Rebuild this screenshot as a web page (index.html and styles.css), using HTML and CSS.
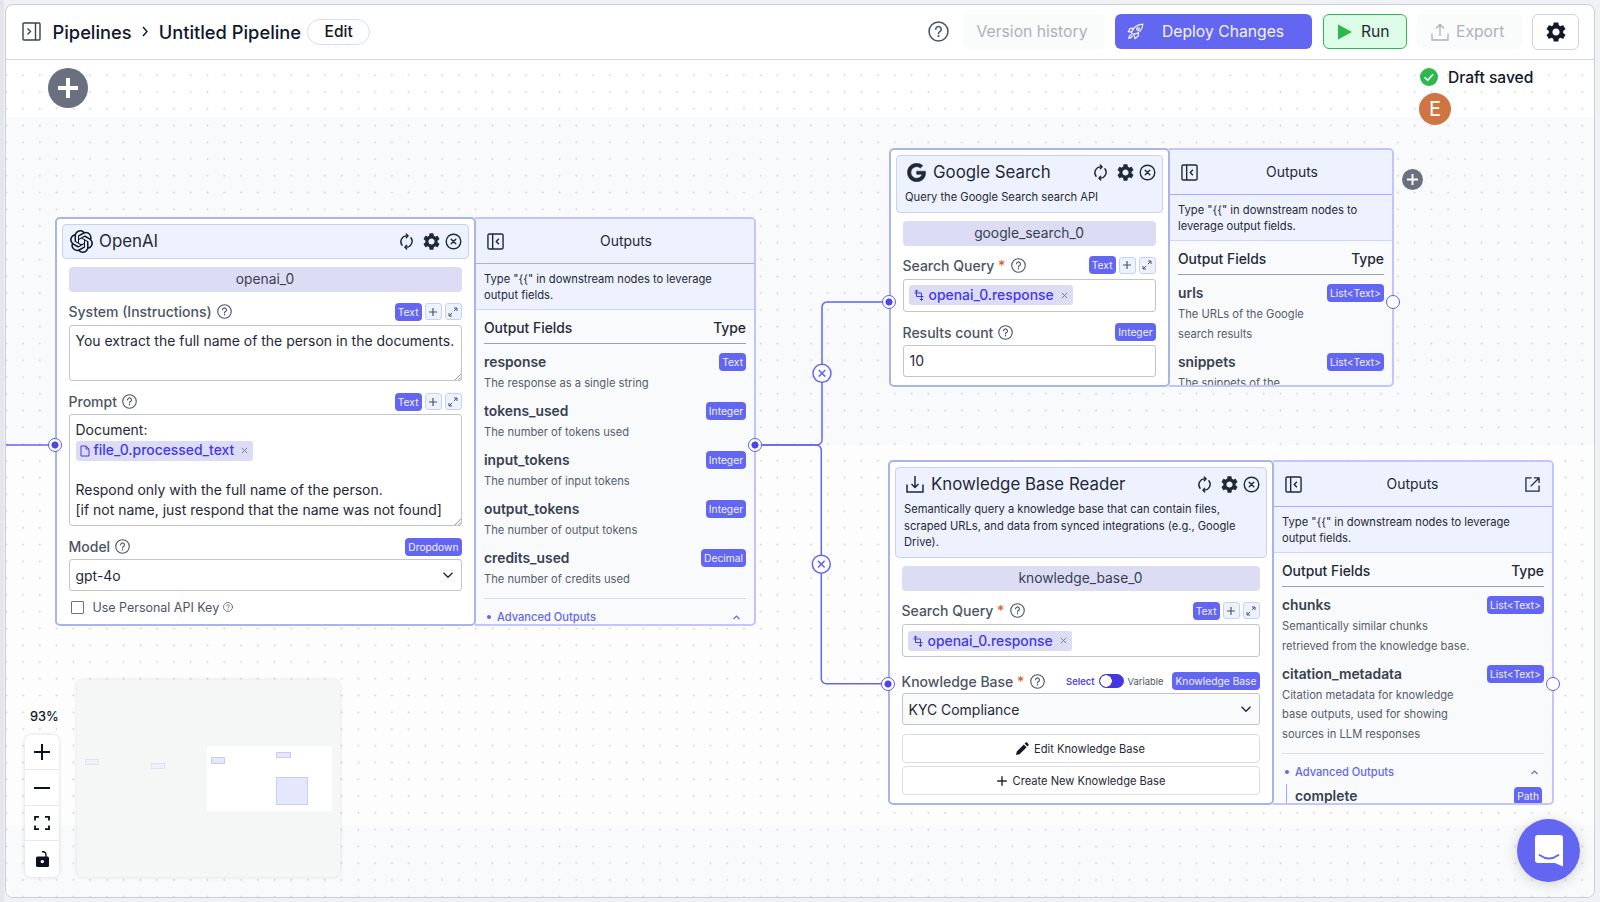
FILE: index.html
```html
<!DOCTYPE html>
<html lang="en">
<head>
    <meta charset="UTF-8">
    <meta name="viewport" content="width=device-width, initial-scale=1.0">
    <title>Untitled Pipeline</title>
    <link rel="stylesheet" href="styles.css">
</head>
<body>
    <!-- Icon sprite -->
    <svg class="sprite" width="0" height="0">
        <symbol id="i-help" viewBox="0 0 20 20"><g fill="none" stroke="currentColor" stroke-width="1.5" stroke-linecap="round"><circle cx="10" cy="10" r="9"/><path d="M7.4 7.8a2.6 2.6 0 1 1 3.9 2.3c-.9.5-1.3 1-1.3 1.9"/></g><circle cx="10" cy="14.4" r="1" fill="currentColor"/></symbol>
        <symbol id="i-gear" viewBox="2 2 20 20"><path fill="currentColor" d="M19.14 12.94c.04-.3.06-.61.06-.94 0-.32-.02-.64-.07-.94l2.03-1.58a.49.49 0 0 0 .12-.61l-1.92-3.32a.488.488 0 0 0-.59-.22l-2.39.96c-.5-.38-1.03-.7-1.62-.94l-.36-2.54a.484.484 0 0 0-.48-.41h-3.84c-.24 0-.43.17-.47.41l-.36 2.54c-.59.24-1.13.57-1.62.94l-2.39-.96c-.22-.08-.47 0-.59.22L2.74 8.87c-.12.21-.08.47.12.61l2.03 1.58c-.05.3-.09.63-.09.94s.02.64.07.94l-2.03 1.58a.49.49 0 0 0-.12.61l1.92 3.32c.12.22.37.29.59.22l2.39-.96c.5.38 1.03.7 1.62.94l.36 2.54c.05.24.24.41.48.41h3.84c.24 0 .44-.17.47-.41l.36-2.54c.59-.24 1.13-.56 1.62-.94l2.39.96c.22.08.47 0 .59-.22l1.92-3.32c.12-.22.07-.47-.12-.61l-2.01-1.58zM12 15.6c-1.98 0-3.6-1.62-3.6-3.6s1.62-3.6 3.6-3.6 3.6 1.62 3.6 3.6-1.62 3.6-3.6 3.6z"/></symbol>
        <symbol id="i-sync" viewBox="0 0 16 18"><g fill="none" stroke="currentColor" stroke-width="1.5" stroke-linecap="round" stroke-linejoin="round"><path d="M3.3 13A6.2 6.2 0 0 1 8 3h1.5M7.8 1l2 2-2 2"/><path d="M12.7 5A6.2 6.2 0 0 1 8 15H6.5M8.2 13l-2 2 2 2"/></g></symbol>
        <symbol id="i-close" viewBox="0 0 18 18"><g fill="none" stroke="currentColor" stroke-width="1.5" stroke-linecap="round"><circle cx="9" cy="9" r="7.7"/><path d="m6.6 6.6 4.8 4.8M11.4 6.6l-4.8 4.8"/></g></symbol>
        <symbol id="i-plus" viewBox="0 0 10 10"><path d="M5 1v8M1 5h8" stroke="currentColor" stroke-width="1.2" fill="none"/></symbol>
        <symbol id="i-expand" viewBox="0 0 10 10"><path d="M6 1h3v3M9 1 5.9 4.1M4 9H1V6M1 9l3.1-3.1" stroke="currentColor" fill="none"/></symbol>
        <symbol id="i-down" viewBox="0 0 12 12"><path d="m1.5 3.8 4.5 4.4 4.5-4.4" stroke="currentColor" stroke-width="1.4" fill="none"/></symbol>
        <symbol id="i-up" viewBox="0 0 12 12"><path d="m2 8 4-4 4 4" stroke="currentColor" stroke-width="1.6" fill="none"/></symbol>
        <symbol id="i-panel" viewBox="0 0 18 18"><path d="M2.5 1h13A1.5 1.5 0 0 1 17 2.5v13a1.5 1.5 0 0 1-1.5 1.5h-13A1.5 1.5 0 0 1 1 15.5v-13A1.5 1.5 0 0 1 2.5 1zM6 1v16M12.6 6 9.8 9l2.8 3" stroke="currentColor" stroke-width="1.5" fill="none"/></symbol>
        <symbol id="i-link" viewBox="0 0 12 12"><path d="M3.5 1v6.5h7M8.5 11.5V4H1.5M1.8 2.7 3.5 1l1.700 1.700M6.800 9.800l1.700 1.700 1.700-1.700" stroke="currentColor" fill="none"/></symbol>
        <symbol id="i-x" viewBox="0 0 8 8"><path d="m1 1 6 6M7 1 1 7" stroke="currentColor" fill="none"/></symbol>
    </svg>

    <div class="app">
        <!-- Top bar -->
        <header class="topbar">
            <svg class="icon toggle" width="19" height="19" viewBox="0 0 19 19"><path d="M2 1h15a1 1 0 0 1 1 1v15a1 1 0 0 1-1 1H2a1 1 0 0 1-1-1V2a1 1 0 0 1 1-1zM13.5 1v17M5.5 6.500l3 3-3 3" stroke="currentColor" stroke-width="1.4" fill="none"/></svg>
            <nav class="crumbs">
                <span>Pipelines</span>
                <svg width="8" height="11" viewBox="0 0 8 11"><path d="m2 1 4 4.500L2 10" stroke="currentColor" stroke-width="1.4" fill="none"/></svg>
                <span>Untitled Pipeline</span>
            </nav>
            <button class="edit">Edit</button>
            <div class="actions">
                <svg class="help" width="21" height="21"><use href="#i-help"/></svg>
                <button class="btn muted history">Version history</button>
                <button class="btn deploy">
                    <svg width="17" height="17" viewBox="0 0 17 17"><g fill="none" stroke="currentColor" stroke-width="1.2" stroke-linejoin="round"><path d="M6 11.300c-.8-.4-1.200-.9-1.600-1.600C6 5 9.500 1.500 15.800 1.200 15.500 7.500 11 10.500 6 11.300zM6.500 5.300H3.200L1.300 8.600l3.200.6M11.400 9.300v3.500l-3.400 2.900-1.200-4.400M4.400 11.700c-1.800.3-2.300 1.800-2.700 3.700 2-.2 3.300-1 3.700-2.700"/><circle cx="11" cy="6" r="1.3"/></g></svg>
                    <span>Deploy Changes</span>
                </button>
                <button class="btn run">
                    <svg width="14" height="16" viewBox="0 0 14 16"><path d="M0 .5 14 8 0 15.500z" fill="#2db84d"/></svg>
                    <span>Run</span>
                </button>
                <button class="btn muted export">
                    <svg width="18" height="18" viewBox="0 0 18 18"><path d="M1 10.500V17h16v-6.500M9 13V1.500M5 5.500l4-4 4 4" stroke="currentColor" stroke-width="1.3" fill="none"/></svg>
                    <span>Export</span>
                </button>
                <button class="btn settings"><svg width="20" height="20"><use href="#i-gear"/></svg></button>
            </div>
        </header>

        <!-- Canvas -->
        <main class="canvas">
            <svg class="edges" width="1588" height="837">
                <path d="M0 385H44M756 385H811a5 5 0 0 0 5-5V247a5 5 0 0 1 5-5H877"/>
                <path d="M756 385H810.300a5 5 0 0 1 5 5V618.700a5 5 0 0 0 5 5H875"/>
                <g class="cut">
                    <circle cx="816" cy="313.3" r="9"/><path d="m812.700 310 6.600 6.600m0-6.600-6.600 6.600"/>
                    <circle cx="815.3" cy="504.2" r="9"/><path d="m812 500.900 6.600 6.600m0-6.600-6.600 6.600"/>
                </g>
            </svg>

            <button class="add-node"><svg width="20" height="20" viewBox="0 0 20 20"><path d="M10 0v20M0 10h20" stroke="#fff" stroke-width="4"/></svg></button>

            <div class="status">
                <div class="saved">
                    <svg width="18" height="18" viewBox="0 0 18 18"><circle cx="9" cy="9" r="9" fill="#2db84d"/><path d="m4.600 9.300 3 3 5.600-6" stroke="#fff" stroke-width="1.6" fill="none"/></svg>
                    <span>Draft saved</span>
                </div>
                <div class="avatar">E</div>
            </div>

            <!-- OpenAI -->
            <section class="node node-openai">
                <div class="card">
                    <div class="card-head">
                        <div class="title">
                            <svg width="23" height="23" viewBox="0 0 24 24"><path fill="#111827" d="M22.282 9.821a5.985 5.985 0 0 0-.516-4.910 6.046 6.046 0 0 0-6.510-2.900A6.065 6.065 0 0 0 4.981 4.182a5.985 5.985 0 0 0-3.998 2.900 6.046 6.046 0 0 0 .743 7.097 5.980 5.980 0 0 0 .510 4.911 6.051 6.051 0 0 0 6.515 2.900A5.985 5.985 0 0 0 13.260 24a6.056 6.056 0 0 0 5.772-4.206 5.990 5.990 0 0 0 3.998-2.900 6.056 6.056 0 0 0-.748-7.073zM13.260 22.430a4.476 4.476 0 0 1-2.876-1.040l.141-.081 4.779-2.758a.795.795 0 0 0 .393-.681v-6.737l2.020 1.168a.071.071 0 0 1 .038.052v5.583a4.504 4.504 0 0 1-4.495 4.494zM3.600 18.304a4.470 4.470 0 0 1-.535-3.014l.142.085 4.783 2.759a.771.771 0 0 0 .780 0l5.843-3.369v2.332a.080.080 0 0 1-.033.062L9.740 19.950a4.500 4.500 0 0 1-6.140-1.646zM2.340 7.896a4.485 4.485 0 0 1 2.366-1.973V11.600a.766.766 0 0 0 .388.676l5.815 3.355-2.020 1.168a.076.076 0 0 1-.071 0l-4.830-2.786A4.504 4.504 0 0 1 2.340 7.872zm16.597 3.855l-5.833-3.387L15.119 7.200a.076.076 0 0 1 .071 0l4.830 2.791a4.494 4.494 0 0 1-.676 8.105v-5.678a.790.790 0 0 0-.407-.667zm2.010-3.023l-.141-.085-4.774-2.782a.776.776 0 0 0-.785 0L9.409 9.230V6.897a.066.066 0 0 1 .028-.061l4.830-2.787a4.500 4.500 0 0 1 6.680 4.660zm-12.640 4.135l-2.020-1.164a.080.080 0 0 1-.038-.057V6.075a4.500 4.500 0 0 1 7.375-3.453l-.142.080L8.704 5.460a.795.795 0 0 0-.393.681zm1.097-2.365l2.602-1.500 2.607 1.500v2.999l-2.597 1.500-2.607-1.500z"/></svg>
                            <h2>OpenAI</h2>
                            <div class="tools"><svg class="sync"><use href="#i-sync"/></svg><svg><use href="#i-gear"/></svg><svg><use href="#i-close"/></svg></div>
                        </div>
                    </div>
                    <div class="body">
                        <div class="node-name">openai_0</div>
                        <div class="label"><span>System (Instructions)</span><svg><use href="#i-help"/></svg><i class="badge">Text</i><i class="mini"><svg><use href="#i-plus"/></svg></i><i class="mini"><svg><use href="#i-expand"/></svg></i></div>
                        <div class="area area-system">You extract the full name of the person in the documents.<svg class="grip" viewBox="0 0 8 8"><path d="M1 8 8 1M5 8l3-3"/></svg></div>
                        <div class="label"><span>Prompt</span><svg><use href="#i-help"/></svg><i class="badge">Text</i><i class="mini"><svg><use href="#i-plus"/></svg></i><i class="mini"><svg><use href="#i-expand"/></svg></i></div>
                        <div class="area area-prompt">
                            <div>Document:</div>
                            <div class="chip"><svg width="10" height="12" viewBox="0 0 10 12"><path d="M1 1h5l3 3v7H1zM6 1v3h3" stroke="currentColor" fill="none"/></svg>file_0.processed_text<svg class="x"><use href="#i-x"/></svg></div>
                            <div class="gap"></div>
                            <div>Respond only with the full name of the person.</div>
                            <div>[if not name, just respond that the name was not found]</div>
                            <svg class="grip" viewBox="0 0 8 8"><path d="M1 8 8 1M5 8l3-3"/></svg>
                        </div>
                        <div class="label"><span>Model</span><svg><use href="#i-help"/></svg><i class="badge">Dropdown</i></div>
                        <div class="input select">gpt-4o<svg><use href="#i-down"/></svg></div>
                        <div class="check"><b></b>Use Personal API Key<svg><use href="#i-help"/></svg></div>
                    </div>
                </div>
                <div class="outputs">
                    <div class="out-head"><svg><use href="#i-panel"/></svg><span>Outputs</span></div>
                    <div class="out-note">Type "{{" in downstream nodes to leverage output fields.</div>
                    <div class="out-list">
                        <div class="out-cols"><span>Output Fields</span><span>Type</span></div>
                        <div class="field"><h3>response</h3><i class="badge">Text</i><p>The response as a single string</p></div>
                        <div class="field"><h3>tokens_used</h3><i class="badge">Integer</i><p>The number of tokens used</p></div>
                        <div class="field"><h3>input_tokens</h3><i class="badge">Integer</i><p>The number of input tokens</p></div>
                        <div class="field"><h3>output_tokens</h3><i class="badge">Integer</i><p>The number of output tokens</p></div>
                        <div class="field"><h3>credits_used</h3><i class="badge">Decimal</i><p>The number of credits used</p></div>
                        <div class="advanced"><b></b>Advanced Outputs<svg><use href="#i-up"/></svg></div>
                    </div>
                </div>
                <span class="handle in on"></span>
                <span class="handle out on"></span>
            </section>

            <!-- Google Search -->
            <section class="node node-google">
                <div class="card">
                    <div class="card-head">
                        <div class="title">
                            <svg class="g" width="19" height="19" viewBox="-8 0 504 512"><path fill="#1f2937" stroke="#1f2937" stroke-width="14" d="M488 261.800C488 403.300 391.100 504 248 504 110.800 504 0 393.200 0 256S110.800 8 248 8c66.800 0 123 24.500 166.300 64.900l-67.500 64.900C258.500 52.600 94.300 116.600 94.300 256c0 86.500 69.100 156.600 153.700 156.600 98.200 0 135-70.400 140.800-106.900H248v-85.300h236.100c2.300 12.700 3.900 24.900 3.900 41.400z"/></svg>
                            <h2>Google Search</h2>
                            <div class="tools"><svg class="sync"><use href="#i-sync"/></svg><svg><use href="#i-gear"/></svg><svg><use href="#i-close"/></svg></div>
                        </div>
                        <p>Query the Google Search search API</p>
                    </div>
                    <div class="body">
                        <div class="node-name">google_search_0</div>
                        <div class="label"><span>Search Query <em>*</em></span><svg><use href="#i-help"/></svg><i class="badge">Text</i><i class="mini"><svg><use href="#i-plus"/></svg></i><i class="mini"><svg><use href="#i-expand"/></svg></i></div>
                        <div class="input tall"><div class="chip"><svg width="12" height="12"><use href="#i-link"/></svg>openai_0.response<svg class="x"><use href="#i-x"/></svg></div></div>
                        <div class="label"><span>Results count</span><svg><use href="#i-help"/></svg><i class="badge">Integer</i></div>
                        <div class="input">10</div>
                    </div>
                </div>
                <div class="outputs">
                    <div class="out-head"><svg><use href="#i-panel"/></svg><span>Outputs</span></div>
                    <div class="out-note">Type "{{" in downstream nodes to leverage output fields.</div>
                    <div class="out-list">
                        <div class="out-cols"><span>Output Fields</span><span>Type</span></div>
                        <div class="field"><h3>urls</h3><i class="badge">List&lt;Text&gt;</i><p>The URLs of the Google search results</p></div>
                        <div class="field"><h3>snippets</h3><i class="badge">List&lt;Text&gt;</i><p>The snippets of the</p></div>
                    </div>
                </div>
                <span class="handle in on"></span>
                <span class="handle out"></span>
                <button class="add-next"><svg width="11" height="11" viewBox="0 0 11 11"><path d="M5.500 0v11M0 5.500h11" stroke="#fff" stroke-width="1.9"/></svg></button>
            </section>

            <!-- Knowledge Base Reader -->
            <section class="node node-kb">
                <div class="card">
                    <div class="card-head">
                        <div class="title">
                            <svg class="g" width="18" height="18" viewBox="0 0 18 18"><path d="M1 9.500V17h16V9.500M9 1v11M5.500 9 9 12.500 12.500 9" stroke="#1f2937" stroke-width="1.5" fill="none"/></svg>
                            <h2>Knowledge Base Reader</h2>
                            <div class="tools"><svg class="sync"><use href="#i-sync"/></svg><svg><use href="#i-gear"/></svg><svg><use href="#i-close"/></svg></div>
                        </div>
                        <p>Semantically query a knowledge base that can contain files, scraped URLs, and data from synced integrations (e.g., Google Drive).</p>
                    </div>
                    <div class="body">
                        <div class="node-name">knowledge_base_0</div>
                        <div class="label"><span>Search Query <em>*</em></span><svg><use href="#i-help"/></svg><i class="badge">Text</i><i class="mini"><svg><use href="#i-plus"/></svg></i><i class="mini"><svg><use href="#i-expand"/></svg></i></div>
                        <div class="input tall"><div class="chip"><svg width="12" height="12"><use href="#i-link"/></svg>openai_0.response<svg class="x"><use href="#i-x"/></svg></div></div>
                        <div class="label label-kb"><span>Knowledge Base <em>*</em></span><svg><use href="#i-help"/></svg><div class="switch"><strong>Select</strong><b></b>Variable</div><i class="badge">Knowledge Base</i></div>
                        <div class="input select tinted">KYC Compliance<svg><use href="#i-down"/></svg></div>
                        <button class="wide first"><svg width="13" height="13" viewBox="0 0 13 13"><path d="m0 13 .8-3.600 7-7 2.800 2.800-7 7zM8.600 1.600l1-1q.8-.7 1.500 0l1.300 1.300q.7.8 0 1.500l-1 1z" fill="#111827"/></svg>Edit Knowledge Base</button>
                        <button class="wide"><svg width="12" height="12"><use href="#i-plus"/></svg>Create New Knowledge Base</button>
                    </div>
                </div>
                <div class="outputs">
                    <div class="out-head"><svg><use href="#i-panel"/></svg><span>Outputs</span><svg class="open" viewBox="0 0 16 16"><path d="M7 1H1v14h14V9M9.500 1H15v5.500M15 1 6 10" stroke="currentColor" stroke-width="1.4" fill="none"/></svg></div>
                    <div class="out-note">Type "{{" in downstream nodes to leverage output fields.</div>
                    <div class="out-list">
                        <div class="out-cols"><span>Output Fields</span><span>Type</span></div>
                        <div class="field"><h3>chunks</h3><i class="badge">List&lt;Text&gt;</i><p>Semantically similar chunks retrieved from the knowledge base.</p></div>
                        <div class="field"><h3>citation_metadata</h3><i class="badge">List&lt;Text&gt;</i><p>Citation metadata for knowledge base outputs, used for showing sources in LLM responses</p></div>
                        <div class="advanced"><b></b>Advanced Outputs<svg><use href="#i-up"/></svg></div>
                        <div class="field nested"><h3>complete</h3><i class="badge">Path</i></div>
                    </div>
                </div>
                <span class="handle in on"></span>
                <span class="handle out"></span>
            </section>

            <!-- Zoom controls and minimap -->
            <div class="zoom">
                <span>93%</span>
                <div class="zoom-buttons">
                    <button><svg width="16" height="16" viewBox="0 0 16 16"><path d="M8 0v16M0 8h16" stroke="currentColor" stroke-width="2"/></svg></button>
                    <button><svg width="16" height="16" viewBox="0 0 16 16"><path d="M0 8h16" stroke="currentColor" stroke-width="2"/></svg></button>
                    <button><svg width="16" height="16" viewBox="0 0 16 16"><path d="M1 5.500V1.800h4M11 1.800h4v3.700M15 10.500v3.700h-4M5 14.200H1v-3.700" stroke="currentColor" stroke-width="1.8" fill="none"/></svg></button>
                    <button><svg width="13" height="16" viewBox="0 0 13 16"><path d="M6 .8c2.800-.6 4 1.200 4 3.200v2" stroke="currentColor" stroke-width="1.4" fill="none"/><path d="M1.500 5.500h10q1.500 0 1.500 1.500v7.500q0 1.500-1.500 1.500h-10Q0 16 0 14.500V7q0-1.500 1.500-1.500z" fill="currentColor"/><circle cx="6.3" cy="10.6" r="1.7" fill="#fff"/></svg></button>
                </div>
            </div>
            <svg class="minimap" width="263" height="197" viewBox="0 0 263 197">
                <rect x="130" y="66" width="125" height="65" fill="#fff"/>
                <g class="far"><rect x="8.5" y="79.5" width="13" height="5"/><rect x="74.5" y="83.5" width="13" height="5"/></g>
                <g class="near"><rect x="134.5" y="77.5" width="13" height="6"/><rect x="199.5" y="72.5" width="14" height="5"/><rect x="199.5" y="97.5" width="31" height="27"/></g>
            </svg>

            <button class="chat"><svg width="28" height="32" viewBox="0 0 28 32"><path d="M3 0h22q3 0 3 3v28.500L20 28H3q-3 0-3-3V3q0-3 3-3z" fill="#fff"/><path d="M4.500 20q9.500 7 19 0" stroke="#6366f1" stroke-width="1.8" stroke-linecap="round" fill="none"/></svg></button>
        </main>
    </div>
</body>
</html>
```
FILE: styles.css
```css
/* Reset and base */
* {
    margin: 0;
    padding: 0;
    box-sizing: border-box;
}

body {
    height: 902px;
    padding: 4px 5px;
    overflow: hidden;
    background: linear-gradient(90deg, #e3e6ea 4px, #eff1f4 4px);
    color: #1f2937;
    font-family: Inter, sans-serif;
}

button {
    font-family: inherit;
    color: inherit;
    border: none;
    background: none;
}

svg {
    display: block;
    flex: none;
}

i {
    font-style: normal;
}

.sprite {
    position: absolute;
}

.app {
    height: 894px;
    border: 1px solid #cbcdd8;
    border-radius: 8px;
    background: #fff;
    overflow: hidden;
}

/* Top bar */
.topbar {
    display: flex;
    align-items: center;
    height: 55px;
    padding: 0 15px 1px 16px;
    border-bottom: 1px solid #d5d6e0;
}

.toggle {
    color: #374151;
}

.crumbs {
    display: flex;
    align-items: center;
    gap: 9.5px;
    margin-left: 11.5px;
    font-size: 18.3px;
    font-weight: 500;
    color: #0f172a;
}

.edit {
    height: 26px;
    width: 63px;
    margin-left: 6px;
    border: 1px solid #d6dafc;
    border-radius: 13px;
    font-size: 15.5px;
    font-weight: 500;
    color: #0f172a;
}

.actions {
    display: flex;
    align-items: center;
    margin-left: auto;
}

.help {
    color: #4b5563;
    margin-right: 14px;
}

.btn {
    display: flex;
    align-items: center;
    height: 35px;
    border-radius: 6px;
    font-size: 15.7px;
    white-space: nowrap;
}

.muted {
    background: #fafbfb;
    color: #aeb1ba;
}

.history {
    width: 142px;
    padding-right: 4px;
    justify-content: center;
    margin-right: 10px;
}

.deploy {
    width: 197px;
    padding-left: 12px;
    gap: 18px;
    margin-right: 11px;
    background: #6366f1;
    color: #f4f4ff;
}

.run {
    width: 84px;
    padding-left: 14px;
    gap: 9px;
    margin-right: 10px;
    border: 1.5px solid #2db84d;
    background: #dcfce7;
}

.export {
    width: 105px;
    padding-left: 14px;
    gap: 7px;
    margin-right: 10px;
}

.settings {
    width: 47px;
    height: 36px;
    justify-content: center;
    border: 1.5px solid #d3d4de;
    background: #fff;
    color: #111827;
}

/* Canvas */
.canvas {
    position: relative;
    height: 837px;
    background:
        radial-gradient(circle, #d4d6da 0.8px, transparent 1.2px) -8.1px 6.8px / 16.78px 16.78px,
        linear-gradient(#fff 57px, #f9fafc 57px, #f9fafc 385px, #fdfdfe 385px, #fdfdfe 765px, #f9fafc 765px);
}

.edges {
    position: absolute;
    inset: 0;
    fill: none;
    stroke: #6366f1;
    stroke-width: 1.5;
}

.cut circle {
    fill: #fff;
}

.add-node {
    position: absolute;
    left: 42px;
    top: 8px;
    width: 40px;
    height: 40px;
    border-radius: 50%;
    display: grid;
    place-items: center;
    background: #6b7080;
}

.status {
    position: absolute;
    left: 1413px;
    top: 6px;
}

.saved {
    display: flex;
    align-items: center;
    gap: 10px;
    height: 22px;
    padding-left: 1px;
    font-size: 15.6px;
    font-weight: 500;
    color: #0f172a;
    white-space: nowrap;
}

.avatar {
    width: 32px;
    height: 32px;
    margin-top: 5px;
    border-radius: 50%;
    background: #cf7544;
    color: #fff;
    font-size: 20px;
    line-height: 32px;
    text-align: center;
}

/* Nodes */
.node {
    position: absolute;
    display: flex;
}

.node-openai {
    left: 49px;
    top: 157px;
    width: 701px;
    height: 409px;
    --card: 421px;
    --port: 228px;
}

.node-google {
    left: 883px;
    top: 88px;
    width: 505px;
    height: 239px;
    --card: 281px;
    --port: 154px;
}

.node-kb {
    left: 882px;
    top: 400px;
    width: 666px;
    height: 345px;
    --card: 386px;
    --port: 223.5px;
}

.card {
    width: var(--card);
    flex: none;
    padding: 5px;
    border: 2px solid #a9b5e4;
    border-radius: 5px;
    background: #fff;
    z-index: 1;
}

.card-head {
    padding: 0 6px 0 7px;
    border: 1px solid #c7d0fb;
    border-radius: 4px;
    background: #eef2ff;
}

.title {
    display: flex;
    align-items: center;
    height: 33px;
    padding-bottom: 1px;
}

.title .g {
    margin-left: 3px;
    margin-right: 1px;
}

.title h2 {
    margin-left: 6px;
    font-size: 16.85px;
    font-weight: 400;
}

.tools {
    display: flex;
    align-items: center;
    gap: 5px;
    margin-left: auto;
}

.tools svg {
    width: 17px;
    height: 17px;
}

.tools .sync {
    width: 15px;
    margin-right: 4px;
}

.card-head p {
    margin: 0 0 6px 1px;
    font-size: 11.16px;
    line-height: 16.7px;
}

.body {
    padding: 8px 7.5px 0 6.5px;
}

.node-name {
    height: 25px;
    border-radius: 4px;
    background: #dddcf5;
    color: #374151;
    font-size: 13.8px;
    line-height: 25px;
    text-align: center;
}

.label {
    display: flex;
    align-items: center;
    height: 20px;
    margin: 10.5px 0 2.5px;
    font-size: 14px;
    font-weight: 500;
    color: #4b5563;
}

.node-name + .label {
    margin: 9.5px 0 3.5px;
}

.label span {
    margin-right: 5px;
}

.label em {
    color: #d9622b;
    font-style: normal;
    margin-right: 1px;
}

.label > svg {
    width: 15px;
    height: 15px;
    margin-right: auto;
}

.badge {
    height: 18px;
    padding: 0 3px;
    border-radius: 4px;
    background: #6366f1;
    color: #f1f1ff;
    font-size: 10.25px;
    font-weight: 400;
    line-height: 18px;
    white-space: nowrap;
}

.mini {
    display: grid;
    place-items: center;
    width: 17px;
    height: 17px;
    margin-left: 3px;
    border: 1px solid #c7d0fb;
    border-radius: 3px;
    background: #eef2ff;
}

.mini svg {
    width: 10px;
    height: 10px;
}

.area,
.input {
    border: 1px solid #c3c5ce;
    border-radius: 3px;
    background: #fff;
    font-size: 13.97px;
    padding: 0 6px;
}

.area {
    position: relative;
    padding-top: 5px;
    line-height: 19.9px;
    white-space: nowrap;
}

.area-system {
    height: 56px;
}

.area-prompt {
    height: 112px;
}

.area .chip {
    margin-top: 1px;
}

.gap {
    height: 19px;
}

.grip {
    position: absolute;
    right: 0;
    bottom: 0;
    width: 7px;
    height: 7px;
    stroke: #7b7f8a;
    fill: none;
}

.input {
    display: flex;
    align-items: center;
    height: 32px;
}

.tall {
    height: 33px;
    padding-left: 5px;
}

.select {
    justify-content: space-between;
}

.select svg {
    width: 12px;
    height: 12px;
    margin-right: 1px;
}

.tinted {
    background: #f9fafc;
}

.chip {
    display: flex;
    align-items: center;
    width: max-content;
    height: 20px;
    padding: 0 5px 0 4px;
    border-radius: 3px;
    background: #dddcf5;
    color: #4338ea;
    font-size: 13.9px;
    font-weight: 500;
}

.chip svg {
    margin-right: 4px;
}

.chip .x {
    width: 7px;
    height: 7px;
    margin: 0 0 0 7px;
    color: #6b7280;
}

.check {
    display: flex;
    align-items: center;
    height: 20px;
    margin: 6px 0 0 2px;
    font-size: 12.46px;
    color: #4b5563;
}

.check b {
    width: 13px;
    height: 13px;
    margin-right: 9px;
    border: 1.5px solid #6b7280;
    border-radius: 1px;
}

.check svg {
    width: 10px;
    height: 10px;
    margin-left: 4px;
}

.label.label-kb {
    margin: 14px 0 2px;
}

.switch {
    display: flex;
    align-items: center;
    gap: 4px;
    margin-right: 9px;
    font-size: 9.4px;
    font-weight: 400;
}

.switch strong {
    font-weight: 600;
    color: #4f46e5;
}

.switch b {
    width: 25px;
    height: 14px;
    border: 1px solid #4338e0;
    border-radius: 7px;
    background: radial-gradient(circle at 6px 6px, #fff 5.5px, #4338e0 6px);
}

.wide {
    display: flex;
    align-items: center;
    justify-content: center;
    gap: 5px;
    width: 100%;
    height: 29px;
    margin-top: 3px;
    border: 1px solid #dcdde3;
    border-radius: 4px;
    background: #fff;
    font-size: 11.14px;
}

.first {
    margin-top: 9px;
}

/* Outputs panel */
.outputs {
    flex: 1;
    margin-left: -1px;
    border: 2px solid #c3c4fa;
    border-left: none;
    border-radius: 0 5px 5px 0;
    background: #f9fafc;
    overflow: hidden;
}

.out-head {
    position: relative;
    display: flex;
    align-items: center;
    justify-content: center;
    height: 45px;
    padding-left: 23px;
    border-bottom: 1.5px solid #a9abf8;
    background: #eef2ff;
    font-size: 13.93px;
}

.out-head svg {
    position: absolute;
    left: 12px;
    width: 17px;
    height: 17px;
}

.out-head .open {
    left: auto;
    right: 12px;
    width: 15px;
    height: 15px;
}

.node-kb .out-head {
    padding-left: 0;
}

.out-note {
    height: 46px;
    padding: 6.5px 9px 0;
    border-bottom: 1px solid #cfd4fb;
    background: #eef2ff;
    font-size: 11.18px;
    line-height: 16.7px;
}

.out-list {
    padding: 0 8px 0 9px;
}

.out-cols {
    display: flex;
    justify-content: space-between;
    height: 34px;
    margin-bottom: 6px;
    border-bottom: 1.5px solid #9ca0ad;
    font-size: 13.86px;
    font-weight: 500;
    line-height: 37px;
}

.field {
    display: grid;
    grid-template-columns: 1fr auto;
    align-items: center;
    margin-bottom: 5.2px;
}

.field h3 {
    height: 24px;
    font-size: 13.85px;
    font-weight: 600;
    line-height: 24px;
    color: #374151;
}

.field p {
    grid-column: 1 / 3;
    width: 74%;
    padding-top: 0.2px;
    font-size: 11.16px;
    line-height: 19.6px;
    color: #555c6a;
}

.advanced {
    display: flex;
    align-items: center;
    height: 31px;
    margin-top: 8px;
    padding: 7px 5px 0 3px;
    border-top: 1px solid #dcdde2;
    color: #6366f1;
    font-size: 11.12px;
    font-weight: 500;
}

.advanced b {
    width: 4px;
    height: 4px;
    margin-right: 6px;
    border-radius: 50%;
    background: #6366f1;
}

.advanced svg {
    width: 9px;
    height: 9px;
    margin-left: auto;
}

.nested {
    margin-left: 4px;
    margin-right: 2px;
    padding-left: 8px;
    border-left: 1px solid #a5a8f7;
}

/* Ports sitting on the node borders */
.handle {
    position: absolute;
    z-index: 2;
    top: var(--port);
    left: 0;
    width: 14px;
    height: 14px;
    margin: -7px 0 0 -7px;
    border: 1.5px solid #5b5ee8;
    border-radius: 50%;
    background: #fff;
}

.handle.out {
    left: calc(100% - 1px);
}

.handle.on {
    background: radial-gradient(circle, #4f46e5 3.2px, #fff 3.9px);
}

.add-next {
    position: absolute;
    right: -29px;
    top: 21px;
    width: 21px;
    height: 21px;
    border-radius: 50%;
    display: grid;
    place-items: center;
    background: #6b7080;
}

/* Zoom controls */
.zoom {
    position: absolute;
    left: 19px;
    top: 648px;
    width: 34px;
}

.zoom span {
    display: block;
    height: 27px;
    margin-left: 5px;
    font-size: 12.8px;
    font-weight: 500;
    line-height: 18px;
    color: #0f172a;
}

.zoom-buttons {
    border-radius: 6px;
    background: #fff;
    box-shadow: 0 0 4px rgba(0, 0, 0, 0.14);
}

.zoom-buttons button {
    display: grid;
    place-items: center;
    width: 100%;
    height: 35.4px;
    border-bottom: 1px solid #e8e9ec;
    color: #0b1020;
}

.zoom-buttons button:last-child {
    border: none;
}

.minimap {
    position: absolute;
    left: 71px;
    top: 620px;
    border-radius: 6px;
    background: #f5f6f6;
    box-shadow: 0 0 4px rgba(0, 0, 0, 0.12);
}

.near rect {
    fill: #e5e7fc;
    stroke: #c9ccf8;
}

.far rect {
    fill: #f0f0f6;
    stroke: #dfe0f2;
}

.chat {
    position: absolute;
    left: 1511px;
    top: 759px;
    width: 63px;
    height: 63px;
    border-radius: 50%;
    display: grid;
    place-items: center;
    background: #6366f1;
    box-shadow: 0 2px 14px rgba(0, 0, 0, 0.16);
}
```
